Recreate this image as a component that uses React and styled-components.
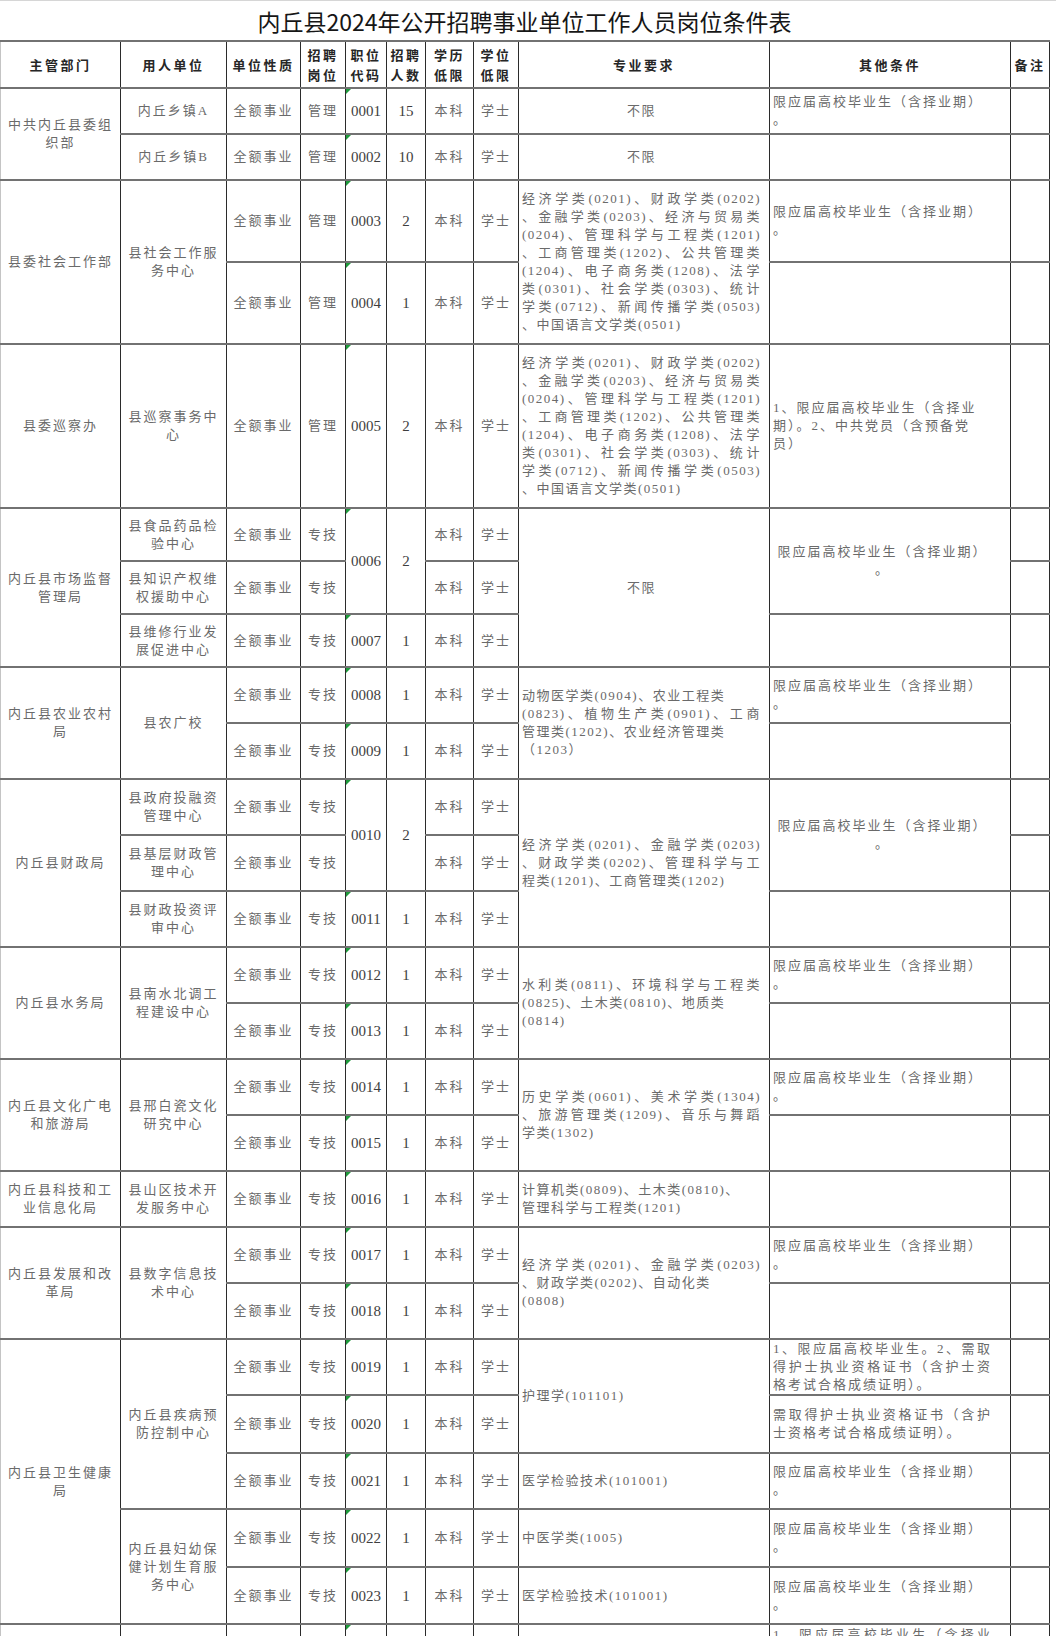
import React from "react";
import styled, { createGlobalStyle, css } from "styled-components";

const Global = createGlobalStyle`
  html, body { margin: 0; padding: 0; background: #ffffff; }
  body { font-family: "Liberation Serif", "Noto Sans CJK SC", serif; }
`;

const Page = styled.div`
  width: 1056px;
  border-top: 1px solid #d6d6d6;
  background: #ffffff;
`;

const Title = styled.h1`
  margin: 0;
  width: 1049px;
  height: 39px;
  display: flex;
  align-items: center;
  justify-content: center;
  font-family: "Noto Sans CJK SC", sans-serif;
  font-weight: 400;
  font-size: 23px;
  color: #161616;
`;

const Table = styled.table`
  width: 1049px;
  border-collapse: collapse;
  table-layout: fixed;
  font-size: 13px;
  letter-spacing: 2px;
  color: #6a6a6a;
`;

const Row = styled.tr`
  height: ${(p) => p.$h}px;
`;

const cellBase = css`
  border-left: 1px solid #2b2b2b;
  border-right: 1px solid #2b2b2b;
  border-top: 2px solid #727272;
  border-bottom: 2px solid #727272;
  padding: 0 1px;
  text-align: center;
  vertical-align: middle;
  line-height: 18px;
  white-space: nowrap;
  overflow: hidden;
`;

const HeadCell = styled.th`
  ${cellBase};
  font-family: "Noto Sans CJK SC", sans-serif;
  font-weight: 700;
  font-size: 13px;
  letter-spacing: 2.5px;
  line-height: 20px;
  color: #262626;
  ${(p) => p.$first && css`border-left-color: #c4c4c4;`}
`;

const Cell = styled.td`
  ${cellBase};
`;

const DeptCell = styled(Cell)`
  border-left-color: #c4c4c4;
  padding: 0 3px;
`;

const UnitCell = styled(Cell)`
  padding: 0 3px;
`;

const NumCell = styled(Cell)`
  font-size: 15px;
  letter-spacing: 0;
  color: #3e3e3e;
`;

const CodeCell = styled(NumCell)`
  position: relative;
  &::before {
    content: "";
    position: absolute;
    left: 0;
    top: 0;
    border-top: 5px solid #1e9b3c;
    border-right: 5px solid transparent;
  }
`;

const MajorCell = styled(Cell)`
  text-align: ${(p) => (p.$center ? "center" : "left")};
  padding: 0 8px 0 3px;
  letter-spacing: 1.5px;
`;

const OtherCell = styled(Cell)`
  text-align: ${(p) => (p.$center ? "center" : "left")};
  padding: 0 18px 0 3px;
  ${(p) => p.$top && css`vertical-align: top; padding-top: 1px;`}
`;

const NoteCell = styled(Cell)``;

const Ln = styled.span`
  display: block;
  ${(p) =>
    p.$j &&
    css`
      white-space: normal;
      text-align: justify;
      text-align-last: justify;
    `}
`;

const L = ({ t, j }) =>
  t.map((s, i) => (
    <Ln key={i} $j={j ? j[i] : false}>
      {s}
    </Ln>
  ));

const OTHER = ["限应届高校毕业生（含择业期）", "。"];

const MAJOR_ECON = [
  "经济学类(0201)、财政学类(0202)",
  "、金融学类(0203)、经济与贸易类",
  "(0204)、管理科学与工程类(1201)",
  "、工商管理类(1202)、公共管理类",
  "(1204)、电子商务类(1208)、法学",
  "类(0301)、社会学类(0303)、统计",
  "学类(0712)、新闻传播学类(0503)",
  "、中国语言文学类(0501)",
];
const J7 = [true, true, true, true, true, true, true, false];

export default function App() {
  return (
    <Page>
      <Global />
      <Title>内丘县2024年公开招聘事业单位工作人员岗位条件表</Title>
      <Table>
        <colgroup>
          <col style={{ width: 120 }} />
          <col style={{ width: 106 }} />
          <col style={{ width: 74 }} />
          <col style={{ width: 45 }} />
          <col style={{ width: 41 }} />
          <col style={{ width: 39 }} />
          <col style={{ width: 48 }} />
          <col style={{ width: 45 }} />
          <col style={{ width: 251 }} />
          <col style={{ width: 241 }} />
          <col style={{ width: 39 }} />
        </colgroup>
        <thead>
          <Row $h={47}>
            <HeadCell $first>主管部门</HeadCell>
            <HeadCell>用人单位</HeadCell>
            <HeadCell>单位性质</HeadCell>
            <HeadCell>招聘<br />岗位</HeadCell>
            <HeadCell>职位<br />代码</HeadCell>
            <HeadCell>招聘<br />人数</HeadCell>
            <HeadCell>学历<br />低限</HeadCell>
            <HeadCell>学位<br />低限</HeadCell>
            <HeadCell>专业要求</HeadCell>
            <HeadCell>其他条件</HeadCell>
            <HeadCell>备注</HeadCell>
          </Row>
        </thead>
        <tbody>
          {/* 0001 */}
          <Row $h={46}>
            <DeptCell rowSpan={2}><L t={["中共内丘县委组", "织部"]} /></DeptCell>
            <UnitCell>内丘乡镇A</UnitCell>
            <Cell>全额事业</Cell>
            <Cell>管理</Cell>
            <CodeCell>0001</CodeCell>
            <NumCell>15</NumCell>
            <Cell>本科</Cell>
            <Cell>学士</Cell>
            <MajorCell $center>不限</MajorCell>
            <OtherCell><L t={OTHER} /></OtherCell>
            <NoteCell />
          </Row>
          {/* 0002 */}
          <Row $h={46}>
            <UnitCell>内丘乡镇B</UnitCell>
            <Cell>全额事业</Cell>
            <Cell>管理</Cell>
            <CodeCell>0002</CodeCell>
            <NumCell>10</NumCell>
            <Cell>本科</Cell>
            <Cell>学士</Cell>
            <MajorCell $center>不限</MajorCell>
            <OtherCell />
            <NoteCell />
          </Row>
          {/* 0003 */}
          <Row $h={82}>
            <DeptCell rowSpan={2}>县委社会工作部</DeptCell>
            <UnitCell rowSpan={2}><L t={["县社会工作服", "务中心"]} /></UnitCell>
            <Cell>全额事业</Cell>
            <Cell>管理</Cell>
            <CodeCell>0003</CodeCell>
            <NumCell>2</NumCell>
            <Cell>本科</Cell>
            <Cell>学士</Cell>
            <MajorCell rowSpan={2}><L t={MAJOR_ECON} j={J7} /></MajorCell>
            <OtherCell><L t={OTHER} /></OtherCell>
            <NoteCell />
          </Row>
          {/* 0004 */}
          <Row $h={82}>
            <Cell>全额事业</Cell>
            <Cell>管理</Cell>
            <CodeCell>0004</CodeCell>
            <NumCell>1</NumCell>
            <Cell>本科</Cell>
            <Cell>学士</Cell>
            <OtherCell />
            <NoteCell />
          </Row>
          {/* 0005 */}
          <Row $h={164}>
            <DeptCell>县委巡察办</DeptCell>
            <UnitCell><L t={["县巡察事务中", "心"]} /></UnitCell>
            <Cell>全额事业</Cell>
            <Cell>管理</Cell>
            <CodeCell>0005</CodeCell>
            <NumCell>2</NumCell>
            <Cell>本科</Cell>
            <Cell>学士</Cell>
            <MajorCell><L t={MAJOR_ECON} j={J7} /></MajorCell>
            <OtherCell>
              <L
                t={["1、限应届高校毕业生（含择业", "期）。2、中共党员（含预备党", "员）"]}
              />
            </OtherCell>
            <NoteCell />
          </Row>
          {/* 0006a */}
          <Row $h={53}>
            <DeptCell rowSpan={3}><L t={["内丘县市场监督", "管理局"]} /></DeptCell>
            <UnitCell><L t={["县食品药品检", "验中心"]} /></UnitCell>
            <Cell>全额事业</Cell>
            <Cell>专技</Cell>
            <CodeCell rowSpan={2}>0006</CodeCell>
            <NumCell rowSpan={2}>2</NumCell>
            <Cell>本科</Cell>
            <Cell>学士</Cell>
            <MajorCell rowSpan={3} $center>不限</MajorCell>
            <OtherCell rowSpan={2} $center><L t={OTHER} /></OtherCell>
            <NoteCell />
          </Row>
          {/* 0006b */}
          <Row $h={53}>
            <UnitCell><L t={["县知识产权维", "权援助中心"]} /></UnitCell>
            <Cell>全额事业</Cell>
            <Cell>专技</Cell>
            <Cell>本科</Cell>
            <Cell>学士</Cell>
            <NoteCell />
          </Row>
          {/* 0007 */}
          <Row $h={53}>
            <UnitCell><L t={["县维修行业发", "展促进中心"]} /></UnitCell>
            <Cell>全额事业</Cell>
            <Cell>专技</Cell>
            <CodeCell>0007</CodeCell>
            <NumCell>1</NumCell>
            <Cell>本科</Cell>
            <Cell>学士</Cell>
            <OtherCell />
            <NoteCell />
          </Row>
          {/* 0008 */}
          <Row $h={56}>
            <DeptCell rowSpan={2}><L t={["内丘县农业农村", "局"]} /></DeptCell>
            <UnitCell rowSpan={2}>县农广校</UnitCell>
            <Cell>全额事业</Cell>
            <Cell>专技</Cell>
            <CodeCell>0008</CodeCell>
            <NumCell>1</NumCell>
            <Cell>本科</Cell>
            <Cell>学士</Cell>
            <MajorCell rowSpan={2}>
              <L
                t={[
                  "动物医学类(0904)、农业工程类",
                  "(0823)、植物生产类(0901)、工商",
                  "管理类(1202)、农业经济管理类",
                  "（1203）",
                ]}
                j={[false, true, false, false]}
              />
            </MajorCell>
            <OtherCell><L t={OTHER} /></OtherCell>
            <NoteCell rowSpan={2} />
          </Row>
          {/* 0009 */}
          <Row $h={56}>
            <Cell>全额事业</Cell>
            <Cell>专技</Cell>
            <CodeCell>0009</CodeCell>
            <NumCell>1</NumCell>
            <Cell>本科</Cell>
            <Cell>学士</Cell>
            <OtherCell />
          </Row>
          {/* 0010a */}
          <Row $h={56}>
            <DeptCell rowSpan={3}>内丘县财政局</DeptCell>
            <UnitCell><L t={["县政府投融资", "管理中心"]} /></UnitCell>
            <Cell>全额事业</Cell>
            <Cell>专技</Cell>
            <CodeCell rowSpan={2}>0010</CodeCell>
            <NumCell rowSpan={2}>2</NumCell>
            <Cell>本科</Cell>
            <Cell>学士</Cell>
            <MajorCell rowSpan={3}>
              <L
                t={[
                  "经济学类(0201)、金融学类(0203)",
                  "、财政学类(0202)、管理科学与工",
                  "程类(1201)、工商管理类(1202)",
                ]}
                j={[true, true, false]}
              />
            </MajorCell>
            <OtherCell rowSpan={2} $center><L t={OTHER} /></OtherCell>
            <NoteCell />
          </Row>
          {/* 0010b */}
          <Row $h={56}>
            <UnitCell><L t={["县基层财政管", "理中心"]} /></UnitCell>
            <Cell>全额事业</Cell>
            <Cell>专技</Cell>
            <Cell>本科</Cell>
            <Cell>学士</Cell>
            <NoteCell />
          </Row>
          {/* 0011 */}
          <Row $h={56}>
            <UnitCell><L t={["县财政投资评", "审中心"]} /></UnitCell>
            <Cell>全额事业</Cell>
            <Cell>专技</Cell>
            <CodeCell>0011</CodeCell>
            <NumCell>1</NumCell>
            <Cell>本科</Cell>
            <Cell>学士</Cell>
            <OtherCell />
            <NoteCell />
          </Row>
          {/* 0012 */}
          <Row $h={56}>
            <DeptCell rowSpan={2}>内丘县水务局</DeptCell>
            <UnitCell rowSpan={2}><L t={["县南水北调工", "程建设中心"]} /></UnitCell>
            <Cell>全额事业</Cell>
            <Cell>专技</Cell>
            <CodeCell>0012</CodeCell>
            <NumCell>1</NumCell>
            <Cell>本科</Cell>
            <Cell>学士</Cell>
            <MajorCell rowSpan={2}>
              <L
                t={["水利类(0811)、环境科学与工程类", "(0825)、土木类(0810)、地质类", "(0814)"]}
                j={[true, false, false]}
              />
            </MajorCell>
            <OtherCell><L t={OTHER} /></OtherCell>
            <NoteCell />
          </Row>
          {/* 0013 */}
          <Row $h={56}>
            <Cell>全额事业</Cell>
            <Cell>专技</Cell>
            <CodeCell>0013</CodeCell>
            <NumCell>1</NumCell>
            <Cell>本科</Cell>
            <Cell>学士</Cell>
            <OtherCell />
            <NoteCell />
          </Row>
          {/* 0014 */}
          <Row $h={56}>
            <DeptCell rowSpan={2}><L t={["内丘县文化广电", "和旅游局"]} /></DeptCell>
            <UnitCell rowSpan={2}><L t={["县邢白瓷文化", "研究中心"]} /></UnitCell>
            <Cell>全额事业</Cell>
            <Cell>专技</Cell>
            <CodeCell>0014</CodeCell>
            <NumCell>1</NumCell>
            <Cell>本科</Cell>
            <Cell>学士</Cell>
            <MajorCell rowSpan={2}>
              <L
                t={["历史学类(0601)、美术学类(1304)", "、旅游管理类(1209)、音乐与舞蹈", "学类(1302)"]}
                j={[true, true, false]}
              />
            </MajorCell>
            <OtherCell><L t={OTHER} /></OtherCell>
            <NoteCell />
          </Row>
          {/* 0015 */}
          <Row $h={56}>
            <Cell>全额事业</Cell>
            <Cell>专技</Cell>
            <CodeCell>0015</CodeCell>
            <NumCell>1</NumCell>
            <Cell>本科</Cell>
            <Cell>学士</Cell>
            <OtherCell />
            <NoteCell />
          </Row>
          {/* 0016 */}
          <Row $h={56}>
            <DeptCell><L t={["内丘县科技和工", "业信息化局"]} /></DeptCell>
            <UnitCell><L t={["县山区技术开", "发服务中心"]} /></UnitCell>
            <Cell>全额事业</Cell>
            <Cell>专技</Cell>
            <CodeCell>0016</CodeCell>
            <NumCell>1</NumCell>
            <Cell>本科</Cell>
            <Cell>学士</Cell>
            <MajorCell>
              <L t={["计算机类(0809)、土木类(0810)、", "管理科学与工程类(1201)"]} />
            </MajorCell>
            <OtherCell />
            <NoteCell />
          </Row>
          {/* 0017 */}
          <Row $h={56}>
            <DeptCell rowSpan={2}><L t={["内丘县发展和改", "革局"]} /></DeptCell>
            <UnitCell rowSpan={2}><L t={["县数字信息技", "术中心"]} /></UnitCell>
            <Cell>全额事业</Cell>
            <Cell>专技</Cell>
            <CodeCell>0017</CodeCell>
            <NumCell>1</NumCell>
            <Cell>本科</Cell>
            <Cell>学士</Cell>
            <MajorCell rowSpan={2}>
              <L
                t={["经济学类(0201)、金融学类(0203)", "、财政学类(0202)、自动化类", "(0808)"]}
                j={[true, false, false]}
              />
            </MajorCell>
            <OtherCell><L t={OTHER} /></OtherCell>
            <NoteCell />
          </Row>
          {/* 0018 */}
          <Row $h={56}>
            <Cell>全额事业</Cell>
            <Cell>专技</Cell>
            <CodeCell>0018</CodeCell>
            <NumCell>1</NumCell>
            <Cell>本科</Cell>
            <Cell>学士</Cell>
            <OtherCell />
            <NoteCell />
          </Row>
          {/* 0019 */}
          <Row $h={56}>
            <DeptCell rowSpan={5}><L t={["内丘县卫生健康", "局"]} /></DeptCell>
            <UnitCell rowSpan={3}><L t={["内丘县疾病预", "防控制中心"]} /></UnitCell>
            <Cell>全额事业</Cell>
            <Cell>专技</Cell>
            <CodeCell>0019</CodeCell>
            <NumCell>1</NumCell>
            <Cell>本科</Cell>
            <Cell>学士</Cell>
            <MajorCell rowSpan={2}>护理学(101101)</MajorCell>
            <OtherCell>
              <L
                t={["1、限应届高校毕业生。2、需取", "得护士执业资格证书（含护士资", "格考试合格成绩证明）。"]}
                j={[true, true, false]}
              />
            </OtherCell>
            <NoteCell />
          </Row>
          {/* 0020 */}
          <Row $h={58}>
            <Cell>全额事业</Cell>
            <Cell>专技</Cell>
            <CodeCell>0020</CodeCell>
            <NumCell>1</NumCell>
            <Cell>本科</Cell>
            <Cell>学士</Cell>
            <OtherCell>
              <L t={["需取得护士执业资格证书（含护", "士资格考试合格成绩证明）。"]} j={[true, false]} />
            </OtherCell>
            <NoteCell />
          </Row>
          {/* 0021 */}
          <Row $h={56}>
            <Cell>全额事业</Cell>
            <Cell>专技</Cell>
            <CodeCell>0021</CodeCell>
            <NumCell>1</NumCell>
            <Cell>本科</Cell>
            <Cell>学士</Cell>
            <MajorCell>医学检验技术(101001)</MajorCell>
            <OtherCell><L t={OTHER} /></OtherCell>
            <NoteCell />
          </Row>
          {/* 0022 */}
          <Row $h={58}>
            <UnitCell rowSpan={2}><L t={["内丘县妇幼保", "健计划生育服", "务中心"]} /></UnitCell>
            <Cell>全额事业</Cell>
            <Cell>专技</Cell>
            <CodeCell>0022</CodeCell>
            <NumCell>1</NumCell>
            <Cell>本科</Cell>
            <Cell>学士</Cell>
            <MajorCell>中医学类(1005)</MajorCell>
            <OtherCell><L t={OTHER} /></OtherCell>
            <NoteCell />
          </Row>
          {/* 0023 */}
          <Row $h={57}>
            <Cell>全额事业</Cell>
            <Cell>专技</Cell>
            <CodeCell>0023</CodeCell>
            <NumCell>1</NumCell>
            <Cell>本科</Cell>
            <Cell>学士</Cell>
            <MajorCell>医学检验技术(101001)</MajorCell>
            <OtherCell><L t={OTHER} /></OtherCell>
            <NoteCell />
          </Row>
          {/* next row, only its top edge is in view */}
          <Row $h={40}>
            <DeptCell />
            <UnitCell />
            <Cell />
            <Cell />
            <CodeCell />
            <NumCell />
            <Cell />
            <Cell />
            <MajorCell />
            <OtherCell $top>
              <L t={["1、限应届高校毕业生（含择业"]} j={[true]} />
            </OtherCell>
            <NoteCell />
          </Row>
        </tbody>
      </Table>
    </Page>
  );
}
